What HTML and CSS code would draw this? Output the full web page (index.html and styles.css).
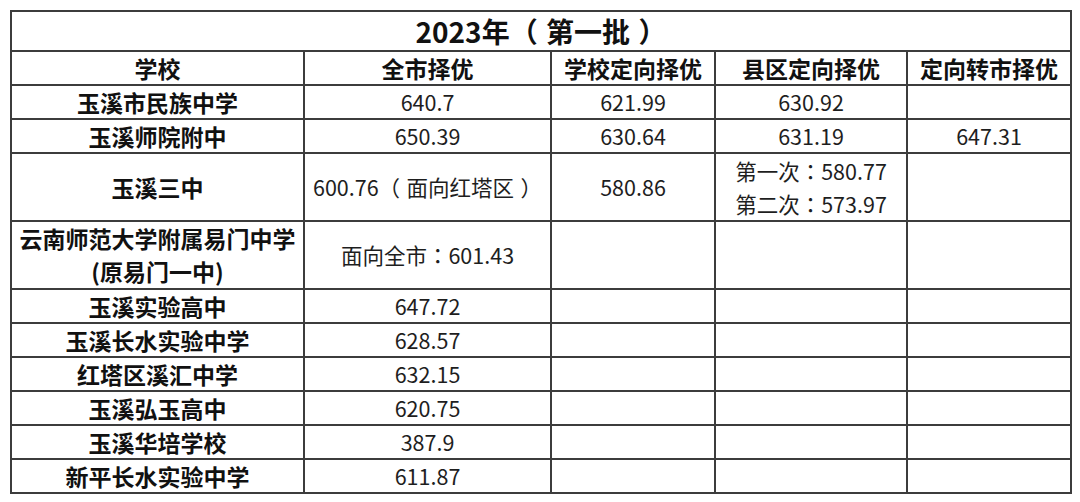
FILE: index.html
```html
<!DOCTYPE html>
<html lang="zh">
<head>
<meta charset="utf-8">
<title>2023年（第一批）</title>
<link rel="stylesheet" href="styles.css">
</head>
<body>
<table class="score-table">
  <colgroup>
    <col class="c-school">
    <col class="c-city">
    <col class="c-school-dir">
    <col class="c-county">
    <col class="c-transfer">
  </colgroup>
  <thead>
    <tr class="row-title"><th colspan="5" class="title">2023年<span class="po">（</span>第一批<span class="pc">）</span></th></tr>
    <tr class="row-head">
      <th>学校</th>
      <th>全市择优</th>
      <th>学校定向择优</th>
      <th>县区定向择优</th>
      <th>定向转市择优</th>
    </tr>
  </thead>
  <tbody>
    <tr class="row"><th>玉溪市民族中学</th><td>640.7</td><td>621.99</td><td>630.92</td><td></td></tr>
    <tr class="row"><th>玉溪师院附中</th><td>650.39</td><td>630.64</td><td>631.19</td><td>647.31</td></tr>
    <tr class="row-tall-a"><th>玉溪三中</th><td>600.76<span class="po">（</span>面向红塔区<span class="pc">）</span></td><td>580.86</td><td class="multi">第一次<span class="p" lang="zh-TW">：</span>580.77<br>第二次<span class="p" lang="zh-TW">：</span>573.97</td><td></td></tr>
    <tr class="row-tall-b"><th class="multi">云南师范大学附属易门中学<br>(原易门一中)</th><td>面向全市<span class="p" lang="zh-TW">：</span>601.43</td><td></td><td></td><td></td></tr>
    <tr class="row"><th>玉溪实验高中</th><td>647.72</td><td></td><td></td><td></td></tr>
    <tr class="row"><th>玉溪长水实验中学</th><td>628.57</td><td></td><td></td><td></td></tr>
    <tr class="row"><th>红塔区溪汇中学</th><td>632.15</td><td></td><td></td><td></td></tr>
    <tr class="row"><th>玉溪弘玉高中</th><td>620.75</td><td></td><td></td><td></td></tr>
    <tr class="row"><th>玉溪华培学校</th><td>387.9</td><td></td><td></td><td></td></tr>
    <tr class="row"><th>新平长水实验中学</th><td>611.87</td><td></td><td></td><td></td></tr>
  </tbody>
</table>
</body>
</html>
```

FILE: styles.css
```css
html, body {
  margin: 0;
  padding: 0;
  background: #ffffff;
}

body {
  padding: 10px 0 0 10px;
  font-family: "Noto Sans CJK SC", "Noto Sans", sans-serif;
  color: #222222;
}

.score-table {
  border-collapse: collapse;
  table-layout: fixed;
  width: 1060px;
}

.c-school { width: 293px; }
.c-city { width: 247px; }
.c-school-dir { width: 164px; }
.c-county { width: 192px; }
.c-transfer { width: 164px; }

.score-table th,
.score-table td {
  border: 2px solid #3c3c3c;
  padding: 0;
  text-align: center;
  vertical-align: middle;
  white-space: nowrap;
  overflow: hidden;
}

.score-table th {
  font-weight: 700;
  font-size: 23px;
  color: #111111;
  line-height: 30px;
}

.score-table td {
  font-weight: 400;
  font-size: 21.5px;
  color: #1e1e1e;
  line-height: 30px;
}

.score-table .title {
  font-size: 28px;
  line-height: 36px;
}

.p {
  font-family: "Noto Sans CJK TC", "Noto Sans CJK SC", sans-serif;
}

.po {
  margin-right: 0.3em;
}

.pc {
  margin-left: 0.3em;
}

.row-title { height: 40px; }
.row-head { height: 34px; }
.row { height: 34px; }
.row-tall-a { height: 66px; }
.row-tall-b { height: 68px; }

.score-table .multi {
  line-height: 33px;
}
```
